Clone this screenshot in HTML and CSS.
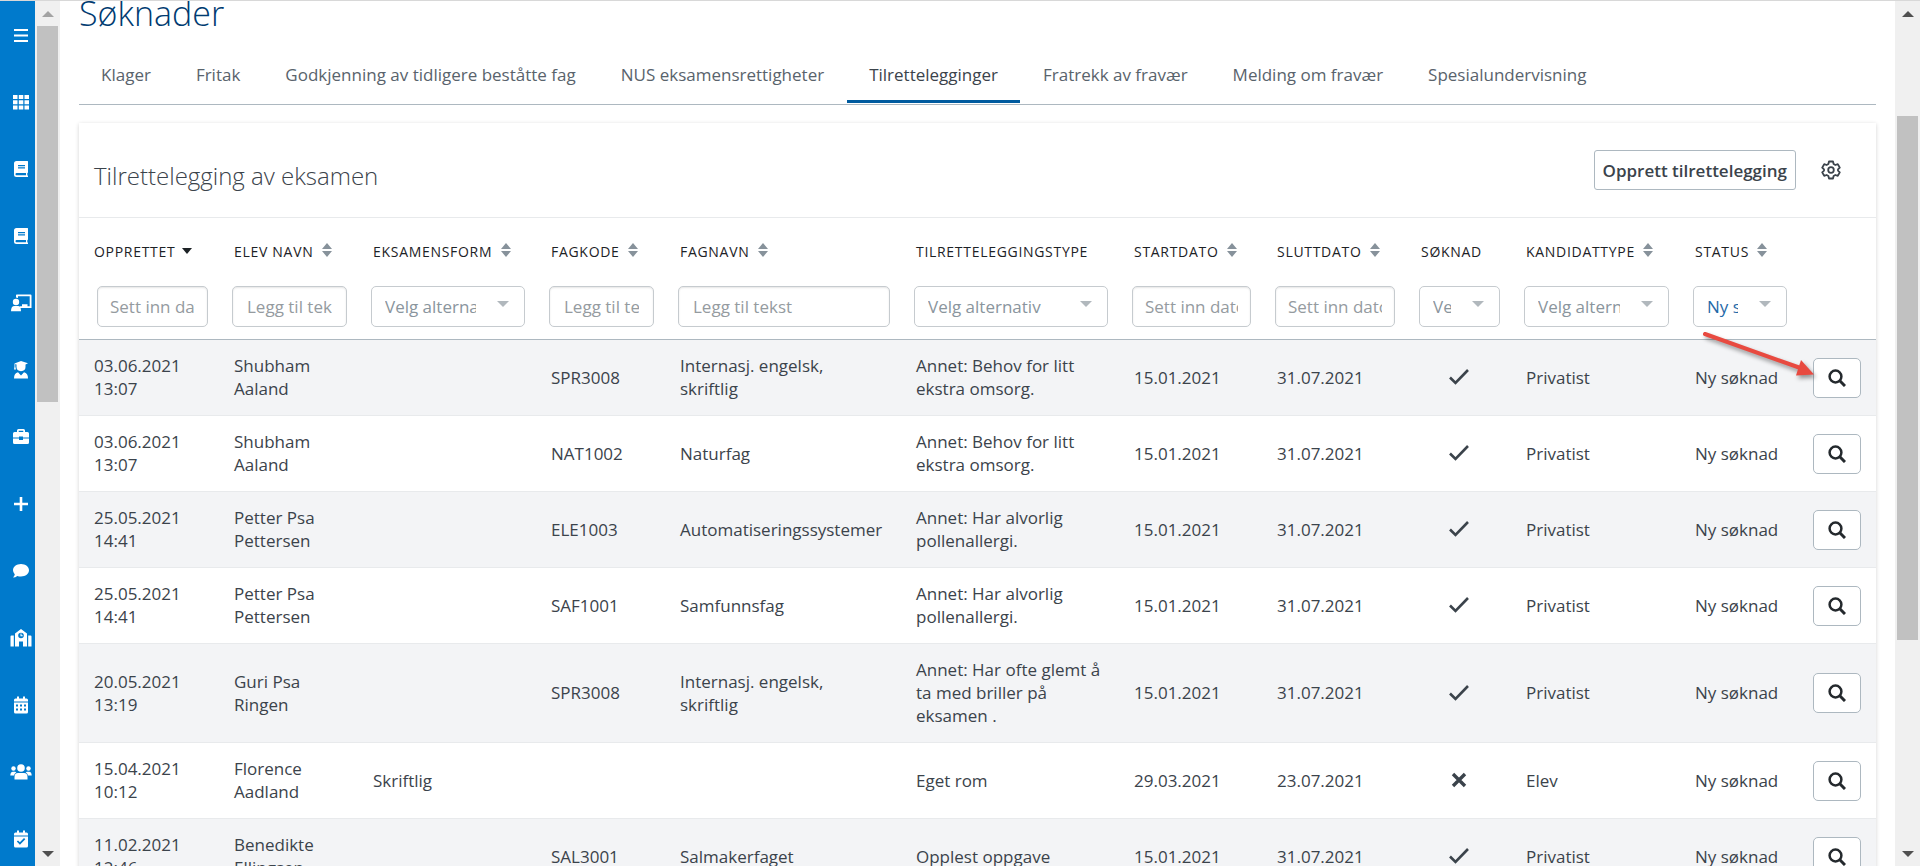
FILE: index.html
```html
<!DOCTYPE html>
<html lang="no">
<head>
    <meta charset="UTF-8">
    <meta name="viewport" content="width=device-width, initial-scale=1.0">
    <title>Søknader</title>
    <link rel="stylesheet" href="styles.css">
</head>
<body>
    <!-- Ikoner -->
    <svg class="sprite" aria-hidden="true">
        <symbol id="sort" viewBox="0 0 10 14"><path d="M5 0L10 6H0zM5 14L0 8h10z"/></symbol>
        <symbol id="search" viewBox="0 0 18 18"><g fill="none" stroke="currentColor"><circle cx="7.500" cy="7.500" r="5.900" stroke-width="2.500"/><path d="M11.800 11.800L17 17" stroke-width="3"/></g></symbol>
        <symbol id="check" viewBox="0 0 20 16"><path d="M1 8.500l5.500 5.500L19 1" fill="none" stroke="currentColor" stroke-width="2.600"/></symbol>
        <symbol id="cross" viewBox="0 0 20 16"><path d="M4 2l12 12M16 2L4 14" fill="none" stroke="currentColor" stroke-width="3.400"/></symbol>
    </svg>

    <div class="layout">
        <nav class="sidebar">
            <a href="#" aria-label="Meny"><svg viewBox="0 0 22 18"><path d="M4 3h14v2H4zM4 8.500h14v2H4zM4 14h14v2H4z"/></svg></a>
            <a href="#" aria-label="Oversikt"><svg viewBox="0 0 22 18"><path d="M3 2h4.500v4H3zM8.800 2h4.500v4H8.800zM14.500 2H19v4h-4.500zM3 7.300h4.500v4H3zM8.800 7.300h4.500v4H8.800zM14.500 7.300H19v4h-4.500zM3 12.600h4.500v4H3zM8.800 12.600h4.500v4H8.800zM14.500 12.600H19v4h-4.500z"/></svg></a>
            <a href="#" aria-label="Fag"><svg viewBox="0 0 22 18"><path fill-rule="evenodd" d="M6.500 1H17.500q.5 0 .5.500V12.500L17.300 13.200V15.300L18 15.700V17H6.500Q4 17 4 14.500V3.500Q4 1 6.500 1zM8 5v1.200h7V5zM8 7.200v1.200h7V7.200zM6.500 13Q5.500 13 5.500 14.200T6.500 15.300H16V13z"/></svg></a>
            <a href="#" aria-label="Fagkoder"><svg viewBox="0 0 22 18"><path fill-rule="evenodd" d="M6.500 1H17.500q.5 0 .5.500V12.500L17.300 13.200V15.300L18 15.700V17H6.500Q4 17 4 14.500V3.500Q4 1 6.500 1zM8 5v1.200h7V5zM8 7.200v1.200h7V7.200zM6.500 13Q5.500 13 5.500 14.200T6.500 15.300H16V13z"/></svg></a>
            <a href="#" aria-label="Undervisning"><svg viewBox="0 0 22 18"><circle cx="6" cy="8" r="3.200"/><path d="M1 17.200Q1 12 4.500 12H8Q11 12 11 17.200zM6 1Q6 .5 6.800 .5H20.500Q21.500.5 21.500 1.500V14H10.500L9.800 12.300H12V10.300H17.500V12.300H19.700V2.300H8V4L6 3.600z"/></svg></a>
            <a href="#" aria-label="Elever"><svg viewBox="0 0 22 18"><path d="M11 0L18 2.300 15.500 3.400V6Q15.500 10 11 10.200 6.500 10 6.500 6V3.400L5.300 3.100V5.500L6 8.500H4L4.500 5.500V2.500zM4 17.500Q4 12 8 11.200L11 14.500 14 11.200Q18 12 18 17.500z"/></svg></a>
            <a href="#" aria-label="Saker"><svg viewBox="0 0 22 18"><path fill-rule="evenodd" d="M7 4V2.500Q7 1 8.500 1H13.500Q15 1 15 2.500V4H17.500Q19 4 19 5.500V9.500H13V8.500H9V9.500H3V5.500Q3 4 4.500 4zM8.700 4H13.300V2.700H8.700zM3 10.500H9V12H13V10.500H19V14.500Q19 16 17.500 16H4.500Q3 16 3 14.500z"/></svg></a>
            <a href="#" aria-label="Ny"><svg viewBox="0 0 22 18"><path d="M9.700 2h2.600v5.700H18v2.600H12.300V16H9.700V10.300H4V7.700H9.700z"/></svg></a>
            <a href="#" aria-label="Meldinger"><svg viewBox="0 0 22 18"><path d="M11 2C15.500 2 19 4.800 19 8.300S15.500 14.500 11 14.500Q9 14.500 7.300 13.900 5.500 15.500 3 15.600 4.500 14 4.800 12.400 3 10.500 3 8.300C3 4.800 6.500 2 11 2z"/></svg></a>
            <a href="#" aria-label="Skoler"><svg viewBox="0 0 22 18"><path fill-rule="evenodd" d="M11 0L17 4.500V17.500H13V12.500H9V17.500H5V4.500zM11 3.700A2.800 2.800 0 1 0 11 9.300 2.800 2.800 0 1 0 11 3.700zM10.500 4.500H11.500V6.300H12.700V7.300H10.500zM.5 7.500Q.5 6.500 1.500 6.500H3.800V17.500H.5zM18.200 6.500H20.500Q21.500 6.500 21.500 7.500V17.500H18.200z"/></svg></a>
            <a href="#" aria-label="Kalender"><svg viewBox="0 0 22 18"><path fill-rule="evenodd" d="M7 .5H9V2.500H13V.5H15V2.500H16.500Q18 2.500 18 4V5.500H4V4Q4 2.500 5.500 2.500H7zM4 6.500H18V16Q18 17.500 16.500 17.500H5.500Q4 17.500 4 16zM6 8.500V10.500H8V8.500zM10 8.500V10.500H12V8.500zM14 8.500V10.500H16V8.500zM6 12.500V14.500H8V12.500zM10 12.500V14.500H12V12.500zM14 12.500V14.500H16V12.500z"/></svg></a>
            <a href="#" aria-label="Grupper"><svg viewBox="0 0 22 18"><circle cx="11" cy="5" r="3.800"/><circle cx="3.500" cy="5.500" r="2.200"/><circle cx="18.500" cy="5.500" r="2.200"/><path d="M4.500 16.500V14Q4.500 10 8 10H14Q17.500 10 17.500 14V16.500zM.3 12.500Q.3 8.700 3 8.700H5Q6 8.700 6.300 9.300 4.300 10.500 4 12.500zM21.700 12.500Q21.700 8.700 19 8.700H17Q16 8.700 15.700 9.300 17.700 10.500 18 12.500z"/></svg></a>
            <a href="#" aria-label="Eksamensplan"><svg viewBox="0 0 22 18"><path fill-rule="evenodd" d="M7 .5H9V2.500H13V.5H15V2.500H16.500Q18 2.500 18 4V5.500H4V4Q4 2.500 5.500 2.500H7zM4 6.500H18V16Q18 17.500 16.500 17.500H5.500Q4 17.500 4 16zM14 8L9.900 12.200 8 10.400 6.800 11.600 9.900 14.700 15.300 9.300z"/></svg></a>
        </nav>

        <div class="scrollbar scrollbar-left">
            <span class="arrow-up muted"></span>
            <span class="thumb"></span>
            <span class="rest"></span>
            <span class="arrow-down"></span>
        </div>

        <main class="content">
            <h1>Søknader</h1>
            <div class="tabs">
                <a href="#">Klager</a>
                <a href="#">Fritak</a>
                <a href="#">Godkjenning av tidligere beståtte fag</a>
                <a href="#">NUS eksamensrettigheter</a>
                <a href="#" class="active">Tilrettelegginger</a>
                <a href="#">Fratrekk av fravær</a>
                <a href="#">Melding om fravær</a>
                <a href="#">Spesialundervisning</a>
            </div>

            <section class="card">
                <div class="card-header">
                    <h2>Tilrettelegging av eksamen</h2>
                    <button class="create">Opprett tilrettelegging</button>
                    <button class="settings" aria-label="Innstillinger">
                        <svg viewBox="0 0 20 20" fill="none" stroke="currentColor" stroke-width="1.800" stroke-linejoin="round"><path d="M8 1.500h4l.6 2.500 1.800 1 2.400-.8 2 3.400L17 9.300v1.400l1.800 1.700-2 3.400-2.400-.8-1.800 1-.6 2.500H8L7.400 16l-1.800-1-2.400.8-2-3.400L3 10.700V9.300L1.200 7.600l2-3.400 2.400.8 1.800-1z"/><circle cx="10" cy="10" r="2.800"/></svg>
                    </button>
                </div>

                <table>
                    <colgroup>
                        <col class="c-created"><col class="c-name"><col class="c-form"><col class="c-code"><col class="c-subject"><col class="c-type"><col class="c-start"><col class="c-end"><col class="c-applied"><col class="c-candidate"><col class="c-status"><col class="c-action">
                    </colgroup>
                    <thead>
                        <tr class="titles">
                            <th>Opprettet <i class="caret"></i></th>
                            <th>Elev navn <svg><use href="#sort"/></svg></th>
                            <th>Eksamensform <svg><use href="#sort"/></svg></th>
                            <th>Fagkode <svg><use href="#sort"/></svg></th>
                            <th>Fagnavn <svg><use href="#sort"/></svg></th>
                            <th>Tilretteleggingstype</th>
                            <th>Startdato <svg><use href="#sort"/></svg></th>
                            <th>Sluttdato <svg><use href="#sort"/></svg></th>
                            <th>Søknad</th>
                            <th>Kandidattype <svg><use href="#sort"/></svg></th>
                            <th>Status <svg><use href="#sort"/></svg></th>
                            <th></th>
                        </tr>
                        <tr class="filters">
                            <td><input type="text" class="date" aria-label="Opprettet" placeholder="Sett inn dato"></td>
                            <td><input type="text" aria-label="Elev navn" placeholder="Legg til tekst"></td>
                            <td><div class="select"><select aria-label="Eksamensform"><option>Velg alternativ</option></select></div></td>
                            <td><input type="text" aria-label="Fagkode" placeholder="Legg til tekst"></td>
                            <td><input type="text" aria-label="Fagnavn" placeholder="Legg til tekst"></td>
                            <td><div class="select"><select aria-label="Tilretteleggingstype"><option>Velg alternativ</option></select></div></td>
                            <td><input type="text" class="date" aria-label="Startdato" placeholder="Sett inn dato"></td>
                            <td><input type="text" class="date" aria-label="Sluttdato" placeholder="Sett inn dato"></td>
                            <td><div class="select"><select aria-label="Søknad"><option>Velg alternativ</option></select></div></td>
                            <td><div class="select"><select aria-label="Kandidattype"><option>Velg alternativ</option></select></div></td>
                            <td><div class="select"><select class="chosen" aria-label="Status"><option>Ny søknad</option></select></div></td>
                            <td></td>
                        </tr>
                    </thead>
                    <tbody>
                        <tr>
                            <td>03.06.2021 13:07</td>
                            <td>Shubham Aaland</td>
                            <td></td>
                            <td>SPR3008</td>
                            <td>Internasj. engelsk, skriftlig</td>
                            <td>Annet: Behov for litt ekstra omsorg.</td>
                            <td>15.01.2021</td>
                            <td>31.07.2021</td>
                            <td class="mark"><svg><use href="#check"/></svg></td>
                            <td>Privatist</td>
                            <td>Ny søknad</td>
                            <td class="action">
                                <button aria-label="Vis søknad"><svg><use href="#search"/></svg></button>
                                <svg class="pointer" viewBox="0 0 120 54"><path d="M6 6L100 39.500" stroke="#e84a40" stroke-width="4" stroke-linecap="round"/><path d="M102 32L115 46.500 97 47.500z" fill="#e84a40"/></svg>
                            </td>
                        </tr>
                        <tr>
                            <td>03.06.2021 13:07</td>
                            <td>Shubham Aaland</td>
                            <td></td>
                            <td>NAT1002</td>
                            <td>Naturfag</td>
                            <td>Annet: Behov for litt ekstra omsorg.</td>
                            <td>15.01.2021</td>
                            <td>31.07.2021</td>
                            <td class="mark"><svg><use href="#check"/></svg></td>
                            <td>Privatist</td>
                            <td>Ny søknad</td>
                            <td class="action"><button aria-label="Vis søknad"><svg><use href="#search"/></svg></button></td>
                        </tr>
                        <tr>
                            <td>25.05.2021 14:41</td>
                            <td>Petter Psa Pettersen</td>
                            <td></td>
                            <td>ELE1003</td>
                            <td>Automatiseringssystemer</td>
                            <td>Annet: Har alvorlig pollenallergi.</td>
                            <td>15.01.2021</td>
                            <td>31.07.2021</td>
                            <td class="mark"><svg><use href="#check"/></svg></td>
                            <td>Privatist</td>
                            <td>Ny søknad</td>
                            <td class="action"><button aria-label="Vis søknad"><svg><use href="#search"/></svg></button></td>
                        </tr>
                        <tr>
                            <td>25.05.2021 14:41</td>
                            <td>Petter Psa Pettersen</td>
                            <td></td>
                            <td>SAF1001</td>
                            <td>Samfunnsfag</td>
                            <td>Annet: Har alvorlig pollenallergi.</td>
                            <td>15.01.2021</td>
                            <td>31.07.2021</td>
                            <td class="mark"><svg><use href="#check"/></svg></td>
                            <td>Privatist</td>
                            <td>Ny søknad</td>
                            <td class="action"><button aria-label="Vis søknad"><svg><use href="#search"/></svg></button></td>
                        </tr>
                        <tr>
                            <td>20.05.2021 13:19</td>
                            <td>Guri Psa Ringen</td>
                            <td></td>
                            <td>SPR3008</td>
                            <td>Internasj. engelsk, skriftlig</td>
                            <td>Annet: Har ofte glemt å ta med briller på eksamen .</td>
                            <td>15.01.2021</td>
                            <td>31.07.2021</td>
                            <td class="mark"><svg><use href="#check"/></svg></td>
                            <td>Privatist</td>
                            <td>Ny søknad</td>
                            <td class="action"><button aria-label="Vis søknad"><svg><use href="#search"/></svg></button></td>
                        </tr>
                        <tr>
                            <td>15.04.2021 10:12</td>
                            <td>Florence Aadland</td>
                            <td>Skriftlig</td>
                            <td></td>
                            <td></td>
                            <td>Eget rom</td>
                            <td>29.03.2021</td>
                            <td>23.07.2021</td>
                            <td class="mark"><svg><use href="#cross"/></svg></td>
                            <td>Elev</td>
                            <td>Ny søknad</td>
                            <td class="action"><button aria-label="Vis søknad"><svg><use href="#search"/></svg></button></td>
                        </tr>
                        <tr>
                            <td>11.02.2021 12:46</td>
                            <td>Benedikte Ellingsen</td>
                            <td></td>
                            <td>SAL3001</td>
                            <td>Salmakerfaget</td>
                            <td>Opplest oppgave</td>
                            <td>15.01.2021</td>
                            <td>31.07.2021</td>
                            <td class="mark"><svg><use href="#check"/></svg></td>
                            <td>Privatist</td>
                            <td>Ny søknad</td>
                            <td class="action"><button aria-label="Vis søknad"><svg><use href="#search"/></svg></button></td>
                        </tr>
                    </tbody>
                </table>
            </section>
        </main>

        <div class="scrollbar scrollbar-right">
            <span class="arrow-up"></span>
            <span class="before"></span>
            <span class="thumb"></span>
            <span class="rest"></span>
            <span class="arrow-down"></span>
        </div>
    </div>
</body>
</html>
```
FILE: styles.css
```css
* {
    margin: 0;
    padding: 0;
    box-sizing: border-box;
}

body {
    font-family: 'Open Sans', sans-serif;
    font-size: 17px;
    line-height: 23px;
    color: #3b434b;
    background: #fff;
    overflow: hidden;
}

button, input, select {
    font: inherit;
    color: inherit;
}

.sprite {
    display: none;
}

.layout {
    display: flex;
    height: 100vh;
    border-top: 1px solid #d8d8d8;
}

/* Sidebar */
.sidebar {
    flex: 0 0 35px;
    background: #007acc;
}

.sidebar a {
    display: flex;
    align-items: center;
    justify-content: flex-end;
    height: 67px;
    padding-right: 3px;
}

.sidebar svg {
    width: 22px;
    height: 18px;
    fill: #fff;
}

/* Scrollbars */
.scrollbar {
    flex: 0 0 25px;
    display: flex;
    flex-direction: column;
    align-items: center;
    background: #f0f0f0;
}

.thumb {
    width: 21px;
    background: #c1c1c1;
}

.arrow-up,
.arrow-down {
    flex: 0 0 25px;
    display: flex;
    align-items: center;
}

.arrow-up::before,
.arrow-down::before {
    content: '';
    border-left: 6px solid transparent;
    border-right: 6px solid transparent;
}

.arrow-up::before {
    border-bottom: 6px solid #505050;
}

.arrow-up.muted::before {
    border-bottom-color: #a3a3a3;
}

.arrow-down::before {
    border-top: 6px solid #505050;
}

.scrollbar-left .thumb {
    flex: 376;
}

.scrollbar-left .rest {
    flex: 439;
}

.scrollbar-right .before {
    flex: 90;
}

.scrollbar-right .thumb {
    flex: 524;
}

.scrollbar-right .rest {
    flex: 201;
}

/* Content */
.content {
    flex: 1;
    min-width: 0;
    padding: 0 19px;
    overflow: hidden;
}

h1 {
    font-size: 34px;
    font-weight: 300;
    line-height: 25px;
    color: #003b71;
}

.tabs {
    display: flex;
    gap: 1px;
    margin-top: 23px;
    border-bottom: 1px solid #adb8c0;
}

.tabs a {
    padding: 14px 22px 14px;
    margin-bottom: 1px;
    border-bottom: 3px solid transparent;
    color: #59636c;
    text-decoration: none;
}

.tabs a.active {
    border-bottom-color: #005b9f;
    color: #3b434b;
}

.card {
    margin-top: 18px;
    box-shadow: 0 1px 4px rgba(0, 0, 0, 0.18);
}

.card-header {
    display: flex;
    align-items: flex-start;
    height: 95px;
    padding: 27px 35px 0 15px;
    border-bottom: 1px solid #e8eaec;
}

h2 {
    flex: 1;
    padding-top: 10px;
    font-size: 24px;
    font-weight: 300;
    line-height: 32px;
}

.create {
    height: 40px;
    padding: 0 8px;
    background: #fff;
    border: 1px solid #adb8c0;
    border-radius: 3px;
    font-weight: 600;
}

.settings {
    display: flex;
    align-items: center;
    height: 40px;
    margin-left: 25px;
    background: none;
    border: none;
}

.settings svg {
    width: 20px;
    height: 20px;
}

/* Table */
table {
    width: 100%;
    table-layout: fixed;
    border-collapse: separate;
    border-spacing: 0;
}

.c-created { width: 141px; }
.c-name { width: 139px; }
.c-form { width: 178px; }
.c-code { width: 129px; }
.c-subject { width: 236px; }
.c-type { width: 218px; }
.c-start { width: 143px; }
.c-end { width: 144px; }
.c-applied { width: 105px; }
.c-candidate { width: 169px; }
.c-status { width: 118px; }
.c-action { width: 77px; }

th {
    height: 67px;
    padding: 0 0 0 14px;
    font-size: 14px;
    font-weight: 500;
    letter-spacing: 0.05em;
    text-align: left;
    text-transform: uppercase;
    white-space: nowrap;
    color: #1d2226;
}

th svg {
    width: 10px;
    height: 14px;
    margin-left: 4px;
    fill: #87929b;
}

.caret {
    display: inline-block;
    margin: 0 0 3px 2px;
    border: 5px solid transparent;
    border-top: 6px solid #1d2226;
    border-bottom: none;
}

.filters td {
    padding: 1px 12px 12px;
    border-bottom: 1px solid #adb8c0;
}

.filters td:first-child {
    padding-left: 18px;
}

input,
select {
    display: block;
    width: 100%;
    height: 41px;
    padding: 0 14px;
    background: #fff;
    border: 1px solid #c6cbcf;
    border-radius: 5px;
}

input {
    box-shadow: inset 0 1px 2px rgba(0, 0, 0, 0.1);
}

input.date {
    padding: 0 12px;
}

input::placeholder {
    color: #959b9f;
}

.select {
    position: relative;
}

.select::after {
    content: '';
    position: absolute;
    top: 15px;
    right: 16px;
    border: 6px solid transparent;
    border-top-color: #b1b8bd;
    border-bottom: none;
    pointer-events: none;
}

select {
    appearance: none;
    padding: 0 48px 0 13px;
    color: #8a959d;
}

select.chosen {
    color: #1f69a8;
}

tbody tr:nth-child(odd) {
    background: #f3f4f6;
}

tbody td {
    padding: 14px 12px 15px 14px;
    border-bottom: 1px solid #e8eaec;
    vertical-align: middle;
}

th:first-child,
tbody td:first-child {
    padding-left: 15px;
}

tbody td:first-child,
tbody td:nth-child(2) {
    padding-right: 30px;
}

tbody td:nth-child(5) {
    padding-right: 18px;
}

.mark svg {
    display: block;
    width: 20px;
    height: 16px;
    margin-left: 28px;
}

tbody .action {
    position: relative;
    padding: 0 15px 0 14px;
}

.action button {
    display: flex;
    align-items: center;
    justify-content: center;
    width: 48px;
    height: 40px;
    background: #fff;
    border: 1px solid #adb8c0;
    border-radius: 5px;
    color: #24292d;
}

.action button svg {
    width: 18px;
    height: 18px;
}

/* Red arrow that points at the first search button */
.pointer {
    position: absolute;
    top: -12px;
    left: -100px;
    width: 120px;
    height: 54px;
    filter: drop-shadow(2px 3px 2px rgba(0, 0, 0, 0.4));
    pointer-events: none;
}
```
